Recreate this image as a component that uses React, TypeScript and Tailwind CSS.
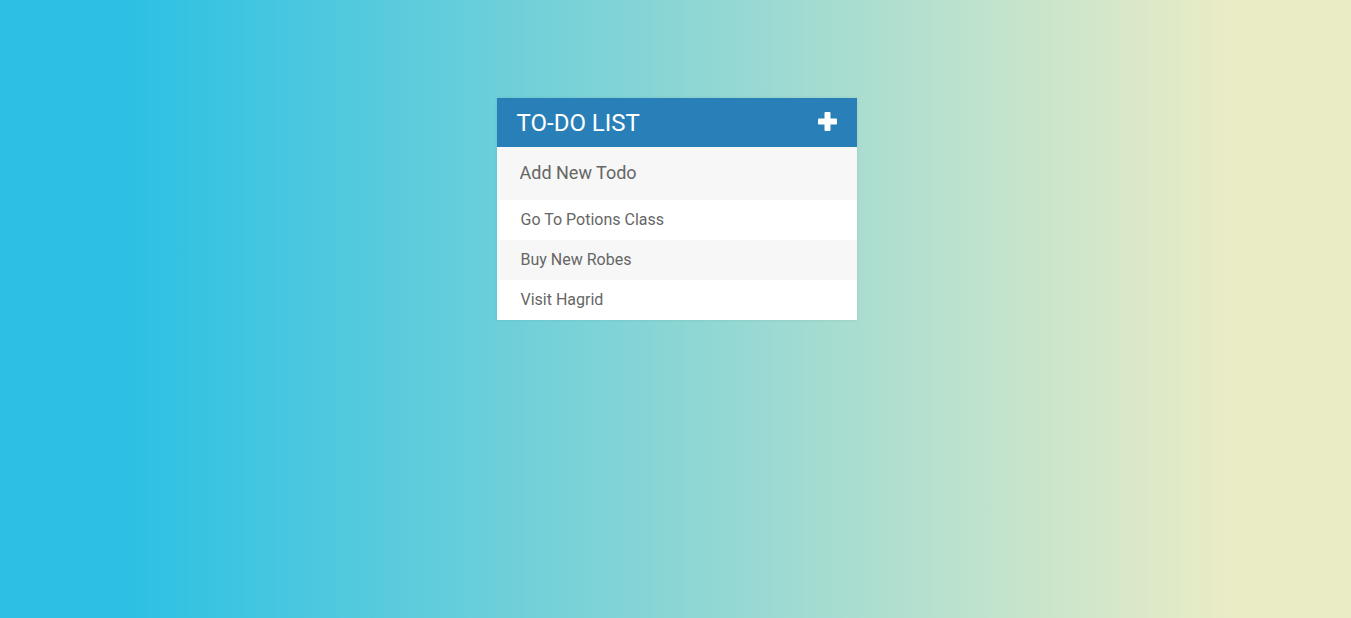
import React, { useState } from "react";

const todos = ["Go To Potions Class", "Buy New Robes", "Visit Hagrid"];

const App: React.FC = () => {
  const [text, setText] = useState("");

  return (
    <div className="min-h-[618px] w-full bg-[linear-gradient(90deg,#2bc0e4_9%,#eaecc6_91%)] pl-[2px] pt-[98px] font-['Roboto',sans-serif]">
      <div className="mx-auto w-[360px] bg-white shadow-[0_0_3px_rgba(0,0,0,0.1)]">
        {/* HEADER */}
        <div className="flex h-[49px] items-center justify-between bg-[#2980b9] pl-5 pr-5">
          <h1 className="text-[24px] font-normal leading-none text-white">
            TO-DO LIST
          </h1>
          <svg width="19" height="19" viewBox="0 0 19 19" className="mb-[2px]">
            <rect x="6.5" y="0" width="6" height="19" rx="1" fill="#fff" />
            <rect x="0" y="6.5" width="19" height="6" rx="1" fill="#fff" />
          </svg>
        </div>

        {/* INPUT */}
        <input
          value={text}
          onChange={(e) => setText(e.target.value)}
          placeholder="Add New Todo"
          className="block h-[53px] w-full bg-[#f7f7f7] px-[23px] pb-[2px] text-[18px] text-[#666] outline-none placeholder:text-[#666]"
        />

        {/* LIST */}
        <ul>
          {todos.map((t, i) => (
            <li
              key={t}
              className={`flex h-10 items-center pl-6 text-[16px] text-[#666] ${
                i % 2 === 1 ? "bg-[#f7f7f7]" : "bg-white"
              }`}
            >
              {t}
            </li>
          ))}
        </ul>
      </div>
    </div>
  );
};

export default App;
